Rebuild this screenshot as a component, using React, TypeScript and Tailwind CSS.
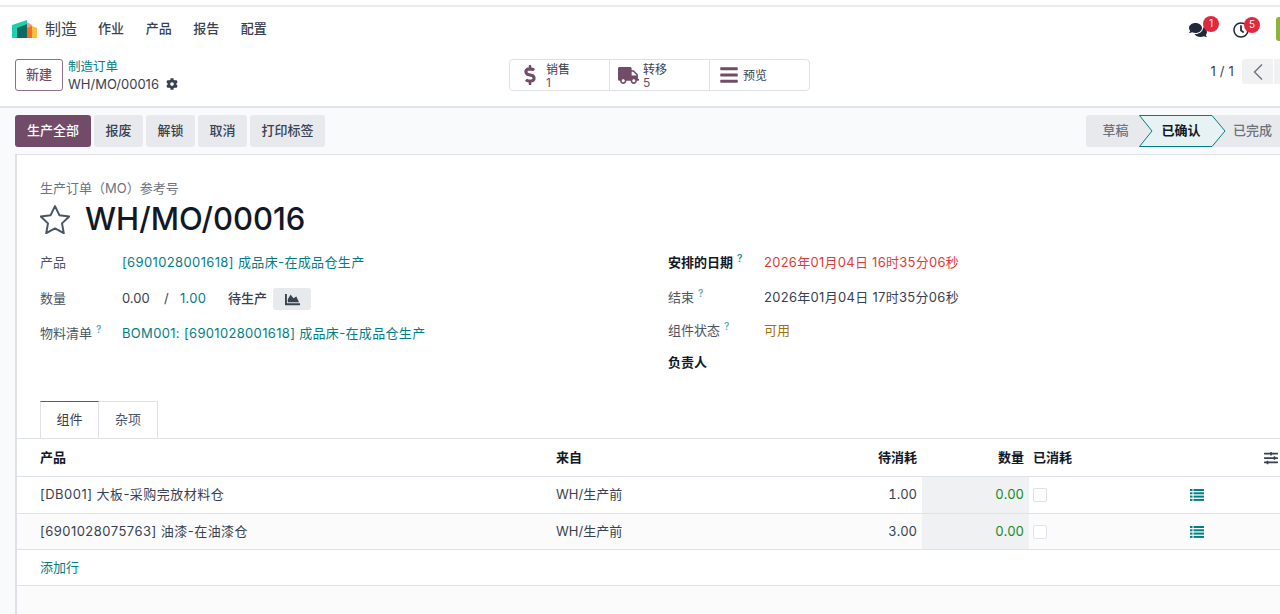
import React from "react";
import { FaComments, FaRegClock, FaDollarSign, FaTruck, FaBars, FaCog, FaChartArea, FaSlidersH } from "react-icons/fa";

const font = "[font-family:Inter,'Noto_Sans_CJK_SC',sans-serif]";

function Help({ className = "text-[#5fa8c4]" }: { className?: string }) {
  return <sup className={`ml-1 text-[10px] font-semibold leading-none ${className}`}>?</sup>;
}

function Logo() {
  return (
    <svg width="26" height="18" viewBox="0 0 26 18" className="shrink-0">
      <path d="M0 5 L15 0 V18 H0 Z" fill="#1fd0ae" />
      <path d="M5 8 L15 4 V18 H5 Z" fill="#0f6b62" />
      <path d="M15 2 L20 5 V18 H15 Z" fill="#f79a8c" />
      <path d="M15 8 L20 6 V18 H15 Z" fill="#f2701e" />
      <path d="M20 6 L25 8 V18 H20 Z" fill="#fbbd3f" />
    </svg>
  );
}

function ListIcon() {
  return (
    <svg width="14" height="12" viewBox="0 0 14 12" className="fill-[#017e84]">
      <rect x="0" y="0" width="2.5" height="2" /><rect x="3.5" y="0" width="10.5" height="2" />
      <rect x="0" y="3.3" width="2.5" height="2" /><rect x="3.5" y="3.3" width="10.5" height="2" />
      <rect x="0" y="6.6" width="2.5" height="2" /><rect x="3.5" y="6.6" width="10.5" height="2" />
      <rect x="0" y="9.9" width="2.5" height="2" /><rect x="3.5" y="9.9" width="10.5" height="2" />
    </svg>
  );
}

function Stat({ icon, title, value, last, iconW }: { icon: React.ReactNode; title: string; value?: string; last?: boolean; iconW: string }) {
  return (
    <div className={`flex h-full items-center ${last ? "w-[99px]" : "w-[100px] border-r border-[#dee2e6]"}`}>
      <div className={`flex justify-center pl-[4px] text-[#714b67] ${iconW}`}>{icon}</div>
      <div className="flex flex-col pt-[1px] text-[12px] leading-[13px] text-[#374151]">
        <span>{title}</span>
        {value && <span className="text-[#714b67]">{value}</span>}
      </div>
    </div>
  );
}

function GrayBtn({ children, w }: { children: React.ReactNode; w: string }) {
  return (
    <button className={`flex h-[32px] items-center justify-center rounded-[3px] bg-[#e7e9ed] text-[13px] font-medium text-[#374151] ${w}`}>
      {children}
    </button>
  );
}

function Row({ label, children, h }: { label: React.ReactNode; children?: React.ReactNode; h: string }) {
  return <div className={`flex items-center ${h}`}>{label}{children}</div>;
}

function TableRow({ product, pending, striped, h }: { product: string; pending: string; striped?: boolean; h: string }) {
  return (
    <tr className={`${h} border-b border-[#dee2e6] ${striped ? "bg-[#fbfbfb]" : ""}`}>
      <td className="pl-[23px] tracking-[0.47px]">{product}</td>
      <td className="pl-[5px]">WH/生产前</td>
      <td className="pr-[5px] text-right tabular-nums">{pending}</td>
      <td className="bg-[#f0f1f3] pr-[5px] text-right tabular-nums text-[#138a1f]">0.00</td>
      <td className="pl-[4px]">
        <span className="block h-[14px] w-[14px] rounded-[2px] border border-[#dee2e6] bg-white" />
      </td>
      <td className="pl-[121px]" colSpan={2}><ListIcon /></td>
    </tr>
  );
}

export default function App() {
  return (
    <div className={`flex h-[614px] w-[1280px] flex-col overflow-hidden bg-white text-[13px] text-[#374151] ${font}`}>
      <div className="h-[7px] shrink-0 border-b-2 border-[#e9ecef]" />

      {/* navbar */}
      <div className="flex h-[43px] shrink-0 items-center pl-[12px]">
        <Logo />
        <span className="ml-[7px] text-[16px] text-[#374151]">制造</span>
        <nav className="ml-[21px] flex gap-[21.6px] text-[13px] font-medium text-[#374151]">
          <span>作业</span><span>产品</span><span>报告</span><span>配置</span>
        </nav>
        <div className="ml-auto flex items-center">
          <div className="relative mr-[26px] mt-[2px] text-[#1f2937]">
            <FaComments size={18} />
            <span className="absolute -right-[12px] -top-[5px] flex h-[16px] w-[16px] items-center justify-center rounded-full bg-[#e0293e] text-[10px] text-white">1</span>
          </div>
          <div className="relative mr-[27px] mt-[2px] text-[#1f2937]">
            <FaRegClock size={16} />
            <span className="absolute -right-[11px] -top-[5px] flex h-[16px] w-[16px] items-center justify-center rounded-full bg-[#e0293e] text-[10px] text-white">5</span>
          </div>
          <div className="h-[24px] w-[4px] rounded-l-[3px] bg-[#8db33a]" />
        </div>
      </div>

      {/* control panel */}
      <div className="flex h-[58px] shrink-0 items-start border-b-2 border-[#e2e4e8] pl-[15px] pt-[9px]">
        <button className="flex h-[32px] w-[48px] items-center justify-center rounded-[3px] border border-[#8f7089] text-[13px] font-medium text-[#714b67]">新建</button>
        <div className="ml-[5px] flex w-[441px] flex-col text-[#374151]">
          <span className="text-[12.5px] leading-[16px] text-[#017e84]">制造订单</span>
          <span className="flex items-center gap-[7px] text-[13px] leading-[18px]">WH/MO/00016 <FaCog size={12} className="text-[#374151]" /></span>
        </div>
        <div className="flex h-[32px] w-[301px] items-center rounded-[4px] border border-[#dee2e6] bg-white">
          <Stat iconW="w-[36px]" icon={<FaDollarSign size={20} />} title="销售" value="1" />
          <Stat iconW="w-[33px]" icon={<FaTruck size={21} />} title="转移" value="5" />
          <Stat iconW="w-[33px]" icon={<FaBars size={20} />} title="预览" last />
        </div>
        <div className="ml-auto flex items-start">
          <span className="mr-[8px] mt-[3px] text-[13px] tracking-[0.2px]">1 / 1</span>
          <button className="flex h-[25px] w-[31px] items-center justify-center rounded-l-[3px] bg-[#f0f1f3] text-[#6b7280]">
            <svg width="12" height="18" viewBox="0 0 12 18" fill="none" stroke="currentColor" strokeWidth="1.4"><path d="M10 1.5 L2.5 9 L10 16.5" /></svg>
          </button>
          <div className="ml-[1px] h-[25px] w-[6px] bg-[#f0f1f3]" />
        </div>
      </div>

      {/* action + sheet */}
      <div className="flex min-h-0 flex-1 flex-col bg-[#f9fafb]">
        <div className="flex h-[46px] shrink-0 items-center justify-between pl-[15px]">
          <div className="flex gap-[3px]">
            <button className="flex h-[32px] w-[76px] items-center justify-center rounded-[3px] bg-[#714b67] text-[13px] font-medium text-white">生产全部</button>
            <GrayBtn w="w-[49px]">报废</GrayBtn>
            <GrayBtn w="w-[49px]">解锁</GrayBtn>
            <GrayBtn w="w-[49px]">取消</GrayBtn>
            <GrayBtn w="w-[75px]">打印标签</GrayBtn>
          </div>
          <div className="relative flex h-[32px] w-[194px] rounded-l-[3px] bg-[#e7e9ed] text-[13px] font-medium text-[#6b7280]">
            <svg width="88" height="32" viewBox="0 0 88 32" className="absolute left-[53px] top-0">
              <path d="M0.5 0.5 H73 L86 16 L73 31.5 H0.5 L13 16 Z" fill="#e6f2f3" stroke="#017e84" strokeWidth="1" />
            </svg>
            <span className="flex w-[53px] items-center justify-center pl-[6px]">草稿</span>
            <span className="relative flex w-[86px] items-center justify-center pr-[2px] font-semibold text-[#111827]">已确认</span>
            <span className="relative flex items-center pl-[8px]">已完成</span>
          </div>
        </div>

        <div className="ml-[15px] flex min-h-0 flex-1 flex-col border-l-2 border-t border-[#dee2e6] bg-white">
          <div className="shrink-0 pl-[23px] pt-[25px]">
            <div className="text-[13px] leading-[16px] text-[#6b7280]">生产订单（MO）参考号</div>
            <div className="mt-[3px] flex h-[40px] items-center">
              <svg width="30" height="29" viewBox="1.5 1.5 27 26" fill="none" stroke="#4b5563" strokeWidth="1.8" strokeLinejoin="round" className="shrink-0">
                <path d="M15 2.5 L18.9 10.6 L27.8 11.8 L21.3 18 L22.9 26.8 L15 22.5 L7.1 26.8 L8.7 18 L2.2 11.8 L11.1 10.6 Z" />
              </svg>
              <h1 className="ml-[15px] text-[31px] font-medium leading-[40px] text-[#111827]">WH/MO/00016</h1>
            </div>

            <div className="mt-[6px] flex h-[158px]">
              <div className="w-[628px]">
                <Row h="h-[36px]" label={<span className="w-[82px] text-[#4b5563]">产品</span>}>
                  <span className="tracking-[0.37px] text-[#017e84]">[6901028001618] 成品床-在成品仓生产</span>
                </Row>
                <Row h="h-[36px]" label={<span className="w-[82px] text-[#4b5563]">数量</span>}>
                  <span className="w-[42px]">0.00</span>
                  <span className="w-[16px]">/</span>
                  <span className="w-[48px] tracking-[0.25px] text-[#017e84]">1.00</span>
                  <span className="font-medium">待生产</span>
                  <span className="ml-[6px] flex h-[22px] w-[38px] items-center justify-center rounded-[3px] bg-[#e7e9ed] text-[#374151]"><FaChartArea size={15} /></span>
                </Row>
                <Row h="h-[34px]" label={<span className="w-[82px] text-[#4b5563]">物料清单<Help /></span>}>
                  <span className="tracking-[0.33px] text-[#017e84]">BOM001: [6901028001618] 成品床-在成品仓生产</span>
                </Row>
              </div>
              <div>
                <Row h="h-[36px]" label={<span className="w-[96px] font-semibold text-[#111827]">安排的日期<Help className="text-[#1f87ab]" /></span>}>
                  <span className="tracking-[0.27px] text-[#e03a3a]">2026年01月04日 16时35分06秒</span>
                </Row>
                <Row h="h-[34px]" label={<span className="w-[96px] text-[#4b5563]">结束<Help /></span>}>
                  <span className="tracking-[0.3px]">2026年01月04日 17时35分06秒</span>
                </Row>
                <Row h="h-[31px]" label={<span className="w-[96px] text-[#4b5563]">组件状态<Help /></span>}>
                  <span className="text-[#a0720c]">可用</span>
                </Row>
                <Row h="h-[34px]" label={<span className="w-[96px] font-semibold text-[#111827]">负责人</span>} />
              </div>
            </div>

            {/* tabs */}
            <div className="mt-[-2px] flex h-[37px] text-[13px]">
              <div className="flex w-[59px] items-center justify-center border-x border-t border-[#dee2e6] border-t-[#714b67] bg-white text-[#374151]">组件</div>
              <div className="flex w-[59px] items-center justify-center border-r border-t border-[#dee2e6] text-[#4b5563]">杂项</div>
            </div>
          </div>

          <table className="w-[1263px] shrink-0 table-fixed border-collapse border-t border-[#dee2e6] text-[13px]">
            <colgroup>
              <col className="w-[534px]" />
              <col className="w-[200px]" />
              <col className="w-[171px]" />
              <col className="w-[107px]" />
              <col className="w-[40px]" />
              <col className="w-[196px]" />
              <col className="w-[15px]" />
            </colgroup>
            <tbody>
              <tr className="h-[38px] border-b border-[#dee2e6] font-semibold text-[#111827]">
                <td className="pl-[23px]">产品</td>
                <td className="pl-[5px]">来自</td>
                <td className="pr-[5px] text-right">待消耗</td>
                <td className="pr-[5px] text-right">数量</td>
                <td className="whitespace-nowrap pl-[4px]">已消耗</td>
                <td className="relative" colSpan={2}>
                  <FaSlidersH size={14} className="absolute right-[2px] top-[12px] text-[#374151]" />
                </td>
              </tr>
              <TableRow product="[DB001] 大板-采购完放材料仓" pending="1.00" h="h-[37px]" />
              <TableRow product="[6901028075763] 油漆-在油漆仓" pending="3.00" h="h-[36px]" striped />
              <tr className="h-[36px] border-b border-[#dee2e6]">
                <td className="pl-[23px] text-[#017e84]">添加行</td>
                <td colSpan={6} />
              </tr>
            </tbody>
          </table>
          <div className="flex-1 bg-[#fbfbfb]" />
        </div>
      </div>
    </div>
  );
}
